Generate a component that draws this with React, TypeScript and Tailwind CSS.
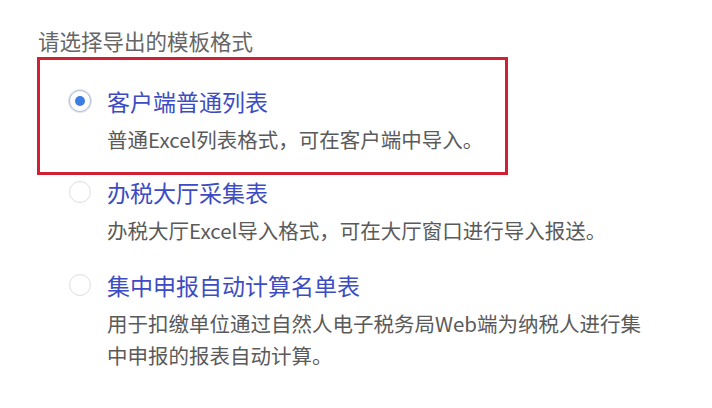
import { useState } from 'react';

const options = [
  { key: 'client', label: '客户端普通列表', desc: '普通Excel列表格式，可在客户端中导入。' },
  { key: 'hall', label: '办税大厅采集表', desc: '办税大厅Excel导入格式，可在大厅窗口进行导入报送。' },
  {
    key: 'auto',
    label: '集中申报自动计算名单表',
    desc: '用于扣缴单位通过自然人电子税务局Web端为纳税人进行集中申报的报表自动计算。',
  },
];

function Radio({ checked }: { checked: boolean }) {
  return (
    <span
      className={`grid h-[22px] w-[22px] shrink-0 place-items-center rounded-full border bg-white ${
        checked ? 'border-[#b3bdd3] shadow-[0_0_0_1px_#dfe4ee]' : 'border-[#dcdfe3]'
      }`}
    >
      {checked && <span className="h-[10px] w-[10px] rounded-full bg-[#3b7de2]" />}
    </span>
  );
}

export default function App() {
  const [value, setValue] = useState('client');

  return (
    <div
      className="h-[408px] w-[712px] bg-white pt-[25px]"
      style={{ fontFamily: '"Noto Sans CJK SC", "Noto Sans", sans-serif' }}
    >
      <div className="pl-[38px] text-[21.5px] leading-[32px] text-[#666]">请选择导出的模板格式</div>

      <div className="flex flex-col">
        {options.map((o, i) => {
          const first = i === 0;
          return (
            <div
              key={o.key}
              onClick={() => setValue(o.key)}
              className={`ml-[37px] cursor-pointer border-[3px] pl-[29px] ${
                first
                  ? 'w-[471px] border-[#cf2133] pt-[24px] pb-[17px]'
                  : 'border-transparent pt-0 pb-0'
              } ${i === 1 ? '-mt-[3px]' : ''} ${i === 2 ? 'mt-[16px]' : ''}`}
            >
              <div className="flex h-[34px] items-center gap-[16px]">
                <Radio checked={value === o.key} />
                <span className="text-[23px] text-[#3d4cc2]">{o.label}</span>
              </div>
              <div className="mt-[5px] w-[590px] pl-[38px] text-[20.5px] leading-[32px] text-[#5a5a5a]">
                {o.desc}
              </div>
            </div>
          );
        })}
      </div>
    </div>
  );
}
